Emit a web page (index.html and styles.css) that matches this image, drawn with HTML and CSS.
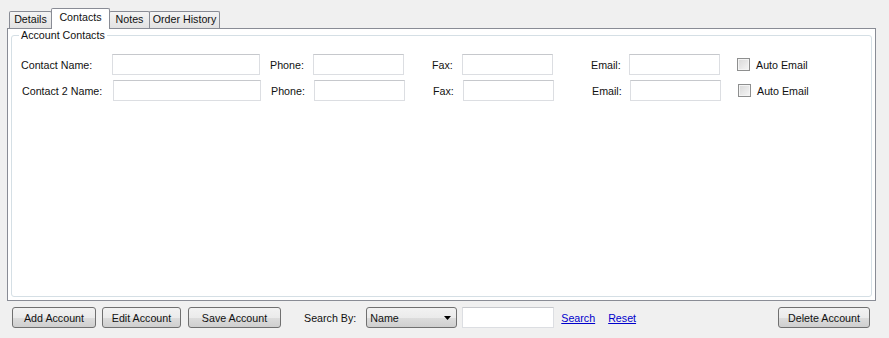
FILE: index.html
```html
<!DOCTYPE html>
<html lang="en">
<head>
  <meta charset="UTF-8" />
  <title>Account – Contacts</title>
  <link rel="stylesheet" href="styles.css">
</head>
<body>
  <div class="window">
    <div class="tabs">
      <div class="tab tab-details">Details</div>
      <div class="tab tab-contacts active">Contacts</div>
      <div class="tab tab-notes">Notes</div>
      <div class="tab tab-history">Order History</div>
    </div>
    <div class="panel">
      <fieldset class="group">
        <legend>Account Contacts</legend>
        <div class="contact-row">
          <label>Contact Name:</label>
          <input type="text" class="field field-name">
          <label>Phone:</label>
          <input type="text" class="field">
          <label>Fax:</label>
          <input type="text" class="field">
          <label>Email:</label>
          <input type="text" class="field">
          <div class="auto"><span class="check"></span>Auto Email</div>
        </div>
        <div class="contact-row row-two">
          <label>Contact 2 Name:</label>
          <input type="text" class="field field-name">
          <label>Phone:</label>
          <input type="text" class="field">
          <label>Fax:</label>
          <input type="text" class="field">
          <label>Email:</label>
          <input type="text" class="field">
          <div class="auto"><span class="check"></span>Auto Email</div>
        </div>
      </fieldset>
    </div>
    <div class="btn-bar">
      <button class="btn btn-add">Add Account</button>
      <button class="btn btn-edit">Edit Account</button>
      <button class="btn btn-save">Save Account</button>
      <span class="search-label">Search By:</span>
      <div class="dropdown">
        <span>Name</span>
        <svg width="7" height="4" viewBox="0 0 7 4"><path d="M0 0H7L3.5 4Z" fill="#000"/></svg>
      </div>
      <input type="text" class="field search-box">
      <a href="#" class="link link-search">Search</a>
      <a href="#" class="link link-reset">Reset</a>
      <button class="btn btn-delete">Delete Account</button>
    </div>
  </div>
</body>
</html>
```
FILE: styles.css
```css
:root {
  --bg: #f0f0f0;
  --tab-border: #898c95;
  --group-border: #d5dfe5;
  --btn-border: #707070;
  --text: #111;
  --link: #0000cc;
}
html, body {
  margin: 0;
  background: var(--bg);
  font-family: 'Liberation Sans', Arial, sans-serif;
  font-size: 10.7px;
  color: var(--text);
}
.window {
  width: 869px;
  padding: 8px 13px 0 7px;
}
.tabs {
  display: flex;
  align-items: flex-end;
  height: 20px;
  padding-left: 2px;
}
.tab {
  box-sizing: border-box;
  height: 17px;
  line-height: 15px;
  border: 1px solid var(--tab-border);
  border-bottom: none;
  border-radius: 2px 2px 0 0;
  background: linear-gradient(#f4f4f4, #e2e2e2);
  text-align: center;
  margin-right: -1px;
}
.tab-details { width: 43px; }
.tab-contacts { width: 59px; }
.tab-notes { width: 41px; }
.tab-history { width: 71px; }
.tab.active {
  position: relative;
  height: 21px;
  margin-bottom: -1px;
  line-height: 17px;
  background: #fff;
  z-index: 1;
}
.panel {
  box-sizing: border-box;
  display: flex;
  flex-direction: column;
  height: 273px;
  border: 1px solid var(--tab-border);
  background: #fff;
  padding: 0 3px 3px 3px;
}
.group {
  flex: 1;
  margin: 0;
  border: 1px solid var(--group-border);
  border-radius: 3px;
  padding: 12px 0 0 9px;
}
.group legend {
  padding: 0 2px;
  margin-left: -2px;
  line-height: 13px;
}
.contact-row {
  display: grid;
  grid-template-columns: 91px 158px 43px 119px 30px 129px 38px 108px auto;
  align-items: center;
  height: 21px;
}
.row-two {
  margin-top: 5px;
  padding-left: 1px;
}
.field {
  box-sizing: border-box;
  width: 91px;
  height: 21px;
  margin: 0;
  border: 1px solid #dcdee2;
  border-top-color: #c6c8cc;
  background: #fff;
  font: inherit;
}
.field-name { width: 148px; }
.auto {
  display: flex;
  align-items: center;
}
.check {
  box-sizing: border-box;
  width: 13px;
  height: 13px;
  margin-right: 6px;
  border: 1px solid #8e8f8f;
  background: linear-gradient(135deg, #d8d8d8, #f6f6f6);
  box-shadow: inset 0 0 0 1px #f4f4f4;
}
.btn-bar {
  display: flex;
  align-items: center;
  margin: 6px 6px 0 5px;
  height: 21px;
}
.btn {
  box-sizing: border-box;
  height: 21px;
  padding: 0;
  border: 1px solid var(--btn-border);
  border-radius: 3px;
  background: linear-gradient(#f2f2f2 0%, #ebebeb 50%, #dddddd 50%, #cfcfcf 100%);
  font: inherit;
  color: var(--text);
}
.btn-add { width: 84px; }
.btn-edit { width: 79px; margin-left: 6px; }
.btn-save { width: 93px; margin-left: 7px; }
.btn-delete { width: 92px; margin-left: auto; }
.search-label { margin-left: 23px; }
.dropdown {
  box-sizing: border-box;
  display: flex;
  align-items: center;
  justify-content: space-between;
  width: 91px;
  height: 21px;
  margin-left: 10px;
  padding: 1px 5px 0 3px;
  border: 1px solid var(--btn-border);
  border-radius: 3px;
  background: linear-gradient(#f2f2f2 0%, #ebebeb 50%, #dddddd 50%, #cfcfcf 100%);
}
.search-box {
  width: 92px;
  margin-left: 5px;
}
.link {
  color: var(--link);
  text-decoration: underline;
}
.link-search { margin-left: 7px; }
.link-reset { margin-left: 13px; }
```
